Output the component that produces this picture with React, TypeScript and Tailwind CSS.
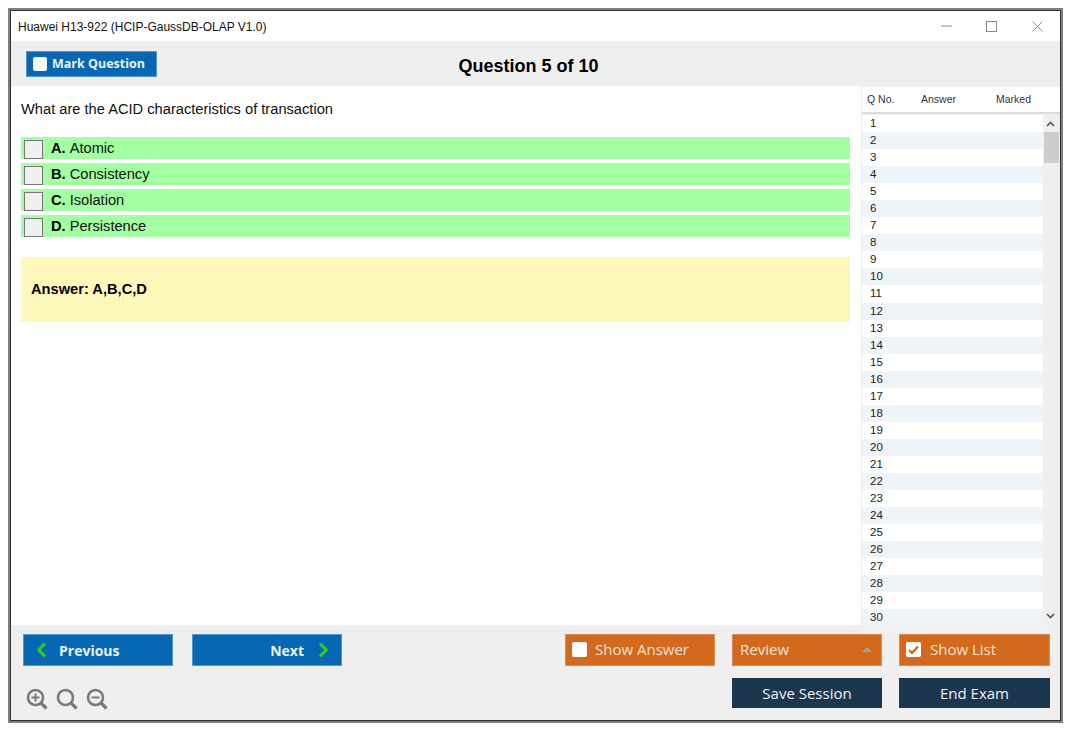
import React from "react";

const arial = "[font-family:'Liberation_Sans',Arial,sans-serif]";
const ui = "[font-family:'Open_Sans','Noto_Sans',sans-serif]";

function Zoom({ kind }: { kind: "in" | "none" | "out" }) {
  return (
    <svg width="22" height="22" viewBox="0 0 22 22" fill="none" stroke="#7a7a7a">
      <circle cx="9.5" cy="9.5" r="7.5" strokeWidth="2.6" />
      <path d="M15 15l5.5 5.5" strokeWidth="3.2" />
      {kind !== "none" && <path d="M5.5 9.5h8" strokeWidth="2" />}
      {kind === "in" && <path d="M9.5 5.5v8" strokeWidth="2" />}
    </svg>
  );
}

function Chevron({ dir }: { dir: "l" | "r" }) {
  return (
    <svg width="11" height="16" viewBox="0 0 11 16" fill="none" stroke="#2ecb23" strokeWidth="3.2">
      <path d={dir === "l" ? "M9 1.5L2.8 8 9 14.5" : "M2 1.5L8.2 8 2 14.5"} />
    </svg>
  );
}

function Box({ checked }: { checked?: boolean }) {
  return (
    <span className="w-[15px] h-[15px] rounded-[2px] bg-white flex items-center justify-center shrink-0">
      {checked && (
        <svg width="11" height="10" viewBox="0 0 11 10" fill="none" stroke="#d2691f" strokeWidth="2.4">
          <path d="M1 5l3 3 6-6.5" />
        </svg>
      )}
    </span>
  );
}

const options = [
  ["A.", "Atomic"],
  ["B.", "Consistency"],
  ["C.", "Isolation"],
  ["D.", "Persistence"],
];

const orange = `h-[32px] w-[150px] bg-[#d2691f] border border-[#e08a4d] flex items-center pb-[1px] text-[15px] text-[#f6e3d4] ${ui}`;
const dark = `h-[30px] w-[150px] bg-[#1c374d] flex items-center justify-center text-[15px] text-[#eef2f5] ${ui}`;
const blue = `h-[32px] w-[150px] bg-[#0767b3] border border-[#4f97cf] flex items-center text-[14px] font-bold text-[#e8f2fa] ${ui}`;

export default function App() {
  return (
    <div className="w-[1075px] h-[735px] bg-white pt-[8px] pl-[8px]">
      <div className="w-[1055px] h-[715px] border-[2px] border-[#7f7f7f]">
        <div className="w-full h-full border border-[#2f2f2f] flex flex-col bg-white">
          {/* title bar */}
          <div className="h-[30px] flex items-center shrink-0 pl-[7px] relative">
            <span className={`text-[12px] pt-[1px] text-[#111] ${arial}`}>Huawei H13-922 (HCIP-GaussDB-OLAP V1.0)</span>
            <div className="ml-auto flex items-center h-full">
              <svg width="11" height="2" viewBox="0 0 11 2" className="mr-[34px]"><path d="M0 1h11" stroke="#8a8a8a" /></svg>
              <svg width="11" height="11" viewBox="0 0 11 11" className="mr-[35px]"><rect x="0.5" y="0.5" width="10" height="10" fill="none" stroke="#8a8a8a" /></svg>
              <svg width="11" height="11" viewBox="0 0 11 11" className="mr-[17px]"><path d="M0.5 0.5l10 10M10.5 0.5l-10 10" stroke="#8a8a8a" /></svg>
            </div>
          </div>
          {/* toolbar */}
          <div className="h-[45px] bg-[#efefef] flex items-center shrink-0 relative pl-[15px]">
            <div className={`w-[131px] h-[26px] mt-[1px] bg-[#0767b3] border border-[#4f97cf] flex items-center pl-[6px] gap-[5px] text-[12.5px] font-bold text-[#e8f2fa] ${ui}`}>
              <span className="w-[14px] h-[14px] rounded-[2px] bg-white shrink-0" />
              Mark Question
            </div>
            <div className={`flex-1 text-center text-[18px] font-bold text-black pr-[160px] mt-[5px] ${arial}`}>Question 5 of 10</div>
          </div>
          {/* body */}
          <div className="flex-1 flex min-h-0">
            <div className={`w-[850px] pl-[10px] pr-[11px] ${arial}`}>
              <div className="h-[51px] pt-[14px] text-[14.67px] leading-[18px] text-[#111]">What are the ACID characteristics of transaction</div>
              <div className="flex flex-col gap-[4px]">
                {options.map(([l, t]) => (
                  <div key={l} className="h-[22px] bg-[#a2ffa2] flex items-start pl-[3px] text-[14.67px] leading-[23px] text-[#111]">
                    <span className="w-[19px] h-[19px] mt-[3px] bg-[#efefef] border border-[#777] shrink-0" />
                    <span className="ml-[8px] font-bold text-black mr-[4px]">{l}</span>
                    {t}
                  </div>
                ))}
              </div>
              <div className="mt-[20px] h-[65px] bg-[#fff8bb] flex items-center pl-[10px] pb-[2px] text-[14.67px] font-bold text-black">Answer: A,B,C,D</div>
            </div>
            {/* list */}
            <div className={`flex-1 flex flex-col min-w-0 pl-[1px] bg-[#efefef] ${arial}`}>
              <div className="h-[27px] mt-[1px] bg-white border-b-[2px] border-[#dcdcdc] flex items-center text-[10.5px] text-[#333] shrink-0">
                <span className="w-[59px] pl-[5px]">Q No.</span>
                <span className="w-[75px]">Answer</span>
                <span>Marked</span>
              </div>
              <div className="flex-1 mt-[1px] flex min-h-0">
                <div className="w-[181px] h-[511px] overflow-hidden border-b-[1px] border-[#dcdcdc]">
                  {Array.from({ length: 30 }, (_, i) => (
                    <div key={i} className={`h-[17.05px] pl-[8px] text-[11.5px] leading-[17px] text-[#222] ${i % 2 ? "bg-[#eff4f8]" : "bg-white"}`}>{i + 1}</div>
                  ))}
                </div>
                <div className="flex-1 relative bg-[#efefef]">
                  <svg width="9" height="6" viewBox="0 0 9 6" className="absolute left-[3px] top-[6px]"><path d="M1 5l3.5-3.5L8 5" fill="none" stroke="#555" strokeWidth="1.6" /></svg>
                  <div className="absolute left-[1px] right-[1px] top-[17px] h-[31px] bg-[#cdcdcd]" />
                  <svg width="9" height="6" viewBox="0 0 9 6" className="absolute left-[3px] top-[498px]"><path d="M1 1l3.5 3.5L8 1" fill="none" stroke="#555" strokeWidth="1.6" /></svg>
                </div>
              </div>
            </div>
          </div>
          {/* footer */}
          <div className="h-[95px] bg-[#efefef] shrink-0 flex justify-between pl-[12px] pr-[10px] pt-[9px]">
            <div className="flex flex-col">
              <div className="flex gap-[19px]">
                <div className={`${blue} pl-[12px]`}><Chevron dir="l" /><span className="ml-[12px]">Previous</span></div>
                <div className={`${blue} justify-end pr-[12px]`}><span className="mr-[14px]">Next</span><Chevron dir="r" /></div>
              </div>
              <div className="flex gap-[8px] mt-[22px] ml-[3px]">
                <Zoom kind="in" />
                <Zoom kind="none" />
                <Zoom kind="out" />
              </div>
            </div>
            <div className="flex flex-col gap-[12px]">
              <div className="flex gap-[17px]">
                <div className={`${orange} pl-[6px]`}><Box /><span className="ml-[8px]">Show Answer</span></div>
                <div className={`${orange} pl-[7px] pr-[9px] justify-between`}>
                  <span>Review</span>
                  <span className="w-0 h-0 border-x-[5px] border-x-transparent border-b-[5px] border-b-[#a9a097]" />
                </div>
                <div className={`${orange} w-[151px] pl-[6px]`}><Box checked /><span className="ml-[9px]">Show List</span></div>
              </div>
              <div className="flex gap-[17px] justify-end">
                <div className={dark}>Save Session</div>
                <div className={`${dark} w-[151px]`}>End Exam</div>
              </div>
            </div>
          </div>
        </div>
      </div>
    </div>
  );
}
